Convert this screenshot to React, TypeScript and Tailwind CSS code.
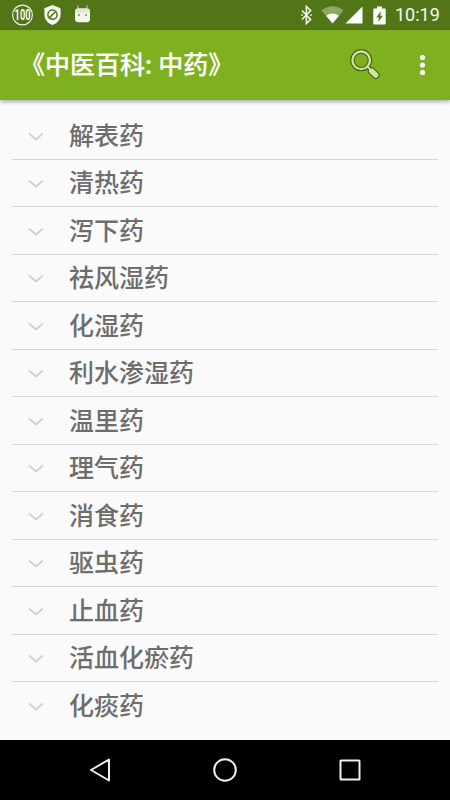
const herbs = [
  "解表药",
  "清热药",
  "泻下药",
  "祛风湿药",
  "化湿药",
  "利水渗湿药",
  "温里药",
  "理气药",
  "消食药",
  "驱虫药",
  "止血药",
  "活血化瘀药",
  "化痰药",
];

function StatusBar() {
  return (
    <div className="flex h-[30px] items-center justify-between bg-[#527517] pl-3 pr-[10px] text-white">
      <div className="flex items-center">
        <svg className="overflow-visible" width="21" height="22" viewBox="0 0 21 22">
          <circle cx="10.5" cy="11" r="9.9" fill="none" stroke="#f3f6ee" strokeWidth="1.1" />
          <text
            transform="translate(2.6 16) scale(0.66 1)"
            fill="#f6f8f2"
            className="font-[Roboto,sans-serif] text-[14px] font-bold"
          >
            100
          </text>
        </svg>
        <svg className="ml-[11px]" width="17" height="22" viewBox="0 0 17 22" fill="none">
          <path d="M8.5 1 16.6 4.2V10.5C16.6 15.5 13 19.6 8.5 21 4 19.6.4 15.5.4 10.5V4.2Z" fill="#f6f8f2" />
          <circle cx="8.5" cy="10.7" r="4.6" stroke="#527517" strokeWidth="1.5" />
          <path d="m5.3 13.9 6.4-6.4" stroke="#527517" strokeWidth="1.5" />
        </svg>
        <svg className="ml-[13px]" width="17" height="22" viewBox="0 0 17 22">
          <path d="m3.7 1.3.9 4M13.3 1.3l-.9 4" stroke="#c5d0b0" strokeWidth="1.1" />
          <path d="M1 7.8Q1 4.6 4 4.6H13Q16 4.6 16 7.8V15Q16 18.3 12.5 18.3H4.5Q1 18.3 1 15Z" fill="#f3f6ee" />
          <path d="M1 7.8Q1 4.6 4 4.6H13Q16 4.6 16 7.8V8.6H1Z" fill="#dfe6d2" />
          <circle cx="4.9" cy="11" r="0.9" fill="#6b8938" />
          <circle cx="12.1" cy="11" r="0.9" fill="#6b8938" />
        </svg>
      </div>
      <div className="flex items-center">
        <svg width="14" height="20" viewBox="0 0 14 20" fill="none" stroke="#f3f6ee" strokeWidth="1.6">
          <path d="m3 5.5 8.6 9-4.2 4V1.5l4.2 4-8.6 9" />
          <path d="M2.2 10h1.6M11.2 10h1.6" />
        </svg>
        <svg className="ml-[8px]" width="23" height="18" viewBox="0 0 23 18">
          <path d="M.5 4.4Q11.5-3.8 22.5 4.4L11.5 17.5Z" fill="#8ea666" />
          <path d="M5.2 9.7Q11.5 5.3 17.8 9.7L11.5 17.5Z" fill="#fff" />
        </svg>
        <svg className="ml-[1px]" width="18" height="18" viewBox="0 0 18 18">
          <path d="M17.5.5V17.5H.5Z" fill="#fff" />
        </svg>
        <svg className="ml-[10px]" width="13" height="19" viewBox="0 0 13 19">
          <path d="M4 .5h5v2h3Q12.7 2.5 12.7 3.5V17.5Q12.7 18.5 11.7 18.5H1.3Q.3 18.5.3 17.5V3.5Q.3 2.5 1.3 2.5H4Z" fill="#fff" />
          <path d="M8.2 5 3.2 11.5H6L4.9 16.3 10 9.7H7.2Z" fill="#527517" />
        </svg>
        <span className="ml-[9px] w-[45px] whitespace-nowrap font-[Roboto,sans-serif] text-[18px] leading-[30px] text-[#f6f8f2]">
          10:19
        </span>
      </div>
    </div>
  );
}

function AppBar() {
  return (
    <header className="relative flex h-[70px] items-center bg-[#7fb020] pl-5 shadow-[0_2px_4px_rgba(0,0,0,0.3)]">
      <h1 className="w-[330px] whitespace-pre pb-[2px] text-[25px] leading-[68px] font-medium text-white [-webkit-text-stroke:0.2px_#fff]">
        《中医百科<span className="font-[Roboto,sans-serif] font-bold">: </span>中药》
      </h1>
      <svg width="32" height="32" viewBox="0 0 32 32" fill="none">
        <circle cx="11.2" cy="11.3" r="8.8" stroke="#3f5b10" strokeWidth="4.4" />
        <path d="m17.2 17.4 4.2 4.2" stroke="#3f5b10" strokeWidth="3.6" />
        <path d="m21.6 22 4.2 4.2" stroke="#3f5b10" strokeWidth="7.4" strokeLinecap="round" />
        <path d="m17.2 17.4 4.2 4.2" stroke="#cde2a3" strokeWidth="1.8" />
        <circle cx="11.2" cy="11.3" r="8.8" stroke="#cde2a3" strokeWidth="2.4" />
        <path d="m21.6 22 4.2 4.2" stroke="#cde2a3" strokeWidth="5.4" strokeLinecap="round" />
      </svg>
      <svg className="ml-[37px]" width="8" height="24" viewBox="0 0 8 24" fill="#fff">
        <circle cx="3.5" cy="4.5" r="2.6" />
        <circle cx="3.5" cy="12" r="2.6" />
        <circle cx="3.5" cy="19.5" r="2.6" />
      </svg>
    </header>
  );
}

function HerbRow({ name }: { name: string }) {
  return (
    <li className="flex h-[47.5px] items-center border-b border-[#d6d6d6] pl-[15.5px] last:border-b-0">
      <svg className="mt-[3px]" width="16" height="10" viewBox="0 0 16 10" fill="none">
        <path d="m1 1.5 6.9 6L14.8 1.5" stroke="#d0d0d0" strokeWidth="1.7" />
      </svg>
      <span className="ml-[25.5px] pb-[2px] text-[25px] leading-[45px] font-medium text-[#6d6d6d]">{name}</span>
    </li>
  );
}

function NavigationBar() {
  return (
    <nav className="flex h-[60px] items-center justify-between bg-black px-[88px]">
      <svg width="24" height="26" viewBox="0 0 24 26" fill="none" stroke="#eee" strokeWidth="2">
        <path d="M21 2.5V23.5L3 13Z" strokeLinejoin="round" />
      </svg>
      <svg width="26" height="26" viewBox="0 0 26 26" fill="none" stroke="#eee" strokeWidth="2">
        <circle cx="13" cy="13" r="10.8" />
      </svg>
      <svg width="24" height="24" viewBox="0 0 24 24" fill="none" stroke="#eee" strokeWidth="2">
        <rect x="2.5" y="2.5" width="19" height="19" rx="0.5" />
      </svg>
    </nav>
  );
}

export default function App() {
  return (
    <div className="flex h-[800px] w-[450px] flex-col overflow-hidden bg-[#fafafa] font-['Noto_Sans_CJK_SC',sans-serif]">
      <StatusBar />
      <AppBar />
      <main className="flex-1 pt-3 pr-[12.5px] pl-3">
        <ul>
          {herbs.map((name) => (
            <HerbRow key={name} name={name} />
          ))}
        </ul>
      </main>
      <NavigationBar />
    </div>
  );
}
